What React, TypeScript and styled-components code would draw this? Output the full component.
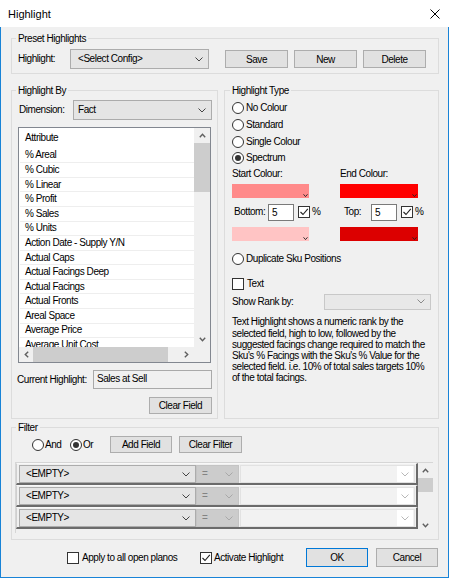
import React from "react";
import styled, { createGlobalStyle } from "styled-components";

const GlobalStyle = createGlobalStyle`
  html, body { margin: 0; padding: 0; background: #ffffff; }
  *, *::before, *::after { box-sizing: border-box; }
`;

const FONT = `"Liberation Sans", Arial, sans-serif`;

const Window = styled.div`
  width: 449px;
  height: 578px;
  display: flex;
  flex-direction: column;
  font-family: ${FONT};
  font-size: 10px;
  letter-spacing: -0.45px;
  line-height: 12px;
  color: #000;
`;

const TitleBar = styled.div`
  flex: none;
  height: 27px;
  background: #ffffff;
  display: flex;
  align-items: center;
  justify-content: space-between;
  padding: 0 9px 0 8px;
`;

const TitleText = styled.span`
  font-size: 11px;
  letter-spacing: 0;
`;

const Body = styled.div`
  flex: 1;
  background: #f0f0f0;
  border: 1px solid #1883d7;
  border-top: none;
  padding: 5px 9px 0 10px;
  display: flex;
  flex-direction: column;
`;

const Group = styled.fieldset`
  margin: 0;
  padding: 0;
  min-width: 0;
  border: 1px solid #dcdcdc;
`;

const Legend = styled.legend<{ $ml: number }>`
  margin-left: ${(p) => p.$ml}px;
  padding: 0 2px;
  height: 13px;
  line-height: 13px;
`;

const PresetRow = styled.div`
  display: flex;
  align-items: center;
  height: 28px;
  padding: 4px 12px 4px 6px;
`;

const FieldLabel = styled.span<{ $w: number; $ml?: number }>`
  flex: none;
  width: ${(p) => p.$w}px;
  margin-left: ${(p) => p.$ml ?? 0}px;
  white-space: nowrap;
`;

const Button = styled.button<{ $w: number; $h?: number; $ml?: number; $default?: boolean }>`
  flex: none;
  width: ${(p) => p.$w}px;
  height: ${(p) => p.$h ?? 18}px;
  margin: 0 0 0 ${(p) => p.$ml ?? 0}px;
  padding: 0;
  font-family: ${FONT};
  font-size: 10px;
  letter-spacing: -0.45px;
  color: #000;
  background: #e1e1e1;
  border: 1px solid ${(p) => (p.$default ? "#0078d7" : "#adadad")};
  border-radius: 0;
`;

type ComboKind = "normal" | "disabled" | "muted" | "value";

const comboBg: Record<ComboKind, string> = {
  normal: "#e5e5e5",
  disabled: "#cccccc",
  muted: "#e8e8e8",
  value: "#f2f2f2",
};
const comboBorder: Record<ComboKind, string> = {
  normal: "#acacac",
  disabled: "#c4c4c4",
  muted: "#c8c8c8",
  value: "#e2e2e2",
};

const Combo = styled.div<{ $w?: number; $h: number; $pl?: number; $kind?: ComboKind; $ml?: number }>`
  flex: ${(p) => (p.$w ? "none" : "1")};
  width: ${(p) => (p.$w ? `${p.$w}px` : "auto")};
  height: ${(p) => p.$h}px;
  margin-left: ${(p) => p.$ml ?? 0}px;
  display: flex;
  align-items: center;
  justify-content: space-between;
  padding: 0 5px 0 ${(p) => p.$pl ?? 4}px;
  background: ${(p) => comboBg[p.$kind ?? "normal"]};
  border: 1px solid ${(p) => comboBorder[p.$kind ?? "normal"]};
  color: ${(p) => (p.$kind === "disabled" ? "#838383" : "#000")};
  white-space: nowrap;
`;

const ValueChevronZone = styled.span`
  align-self: stretch;
  display: flex;
  align-items: center;
  justify-content: center;
  width: 16px;
  margin-right: -4px;
  background: #ffffff;
`;

const MainRow = styled.div`
  display: grid;
  grid-template-columns: 207px 215px;
  column-gap: 6px;
  margin-top: 10px;
`;

const LeftInner = styled.div`
  display: flex;
  flex-direction: column;
  padding: 3px 0 4px;
`;

const DimRow = styled.div`
  display: flex;
  align-items: center;
  height: 20px;
  padding-left: 7px;
`;

const ListBox = styled.div`
  margin: 7px 6px 0;
  height: 236px;
  border: 1px solid #828790;
  background: #ffffff;
  display: grid;
  grid-template-columns: 175px 16px;
  grid-template-rows: 219px 15px;
`;

const ListContent = styled.div`
  overflow: hidden;
`;

const ListHeader = styled.div`
  height: 20.7px;
  display: flex;
  align-items: center;
  padding-left: 6px;
`;

const ListItem = styled.div`
  height: 14.58px;
  display: flex;
  align-items: center;
  padding-left: 5px;
  margin-left: 1px;
  border-bottom: 1px solid #eeeeee;
  white-space: nowrap;
`;

const VScroll = styled.div<{ $thumbTop: number; $thumbH: number }>`
  display: flex;
  flex-direction: column;
  background: #f0f0f0;
`;

const HScroll = styled.div`
  display: flex;
  background: #f0f0f0;
`;

const ScrollArrowBox = styled.div<{ $w?: number; $h?: number }>`
  flex: none;
  width: ${(p) => (p.$w ? `${p.$w}px` : "auto")};
  height: ${(p) => (p.$h ? `${p.$h}px` : "auto")};
  display: flex;
  align-items: center;
  justify-content: center;
`;

const Thumb = styled.div<{ $w?: number; $h?: number }>`
  flex: none;
  width: ${(p) => (p.$w ? `${p.$w}px` : "auto")};
  height: ${(p) => (p.$h ? `${p.$h}px` : "auto")};
  background: #cdcdcd;
`;

const Track = styled.div`
  flex: 1;
`;

const Corner = styled.div`
  background: #f0f0f0;
`;

const CurrentRow = styled.div`
  display: flex;
  align-items: center;
  margin-top: 7px;
  padding-left: 5px;
  height: 19px;
`;

const ReadBox = styled.div`
  flex: none;
  width: 119px;
  height: 19px;
  padding: 2px 0 0 3px;
  border: 1px solid #a9a9a9;
  background: #f0f0f0;
  white-space: nowrap;
`;

const ClearRow = styled.div`
  display: flex;
  justify-content: flex-end;
  margin-top: 8px;
  padding-right: 5px;
`;

const RightInner = styled.div`
  display: flex;
  flex-direction: column;
  padding: 3px 0 0 7px;
`;

const OptionRow = styled.div<{ $h: number; $mt?: number; $gap?: number }>`
  display: flex;
  align-items: center;
  gap: ${(p) => p.$gap ?? 2}px;
  height: ${(p) => p.$h}px;
  margin-top: ${(p) => p.$mt ?? 0}px;
  white-space: nowrap;
`;

const RadioCircle = styled.span<{ $checked?: boolean }>`
  flex: none;
  width: 12px;
  height: 12px;
  border-radius: 50%;
  border: 1px solid #333333;
  background: #ffffff;
  display: inline-flex;
  align-items: center;
  justify-content: center;
  &::after {
    content: "";
    width: 6px;
    height: 6px;
    border-radius: 50%;
    background: #333333;
    display: ${(p) => (p.$checked ? "block" : "none")};
  }
`;

const CheckBox = styled.span`
  flex: none;
  width: 12px;
  height: 12px;
  border: 1px solid #333333;
  background: #ffffff;
  display: inline-flex;
  align-items: center;
  justify-content: center;
`;

const TwoCol = styled.div<{ $mt: number; $h: number }>`
  display: grid;
  grid-template-columns: 108px 1fr;
  align-items: center;
  margin-top: ${(p) => p.$mt}px;
  height: ${(p) => p.$h}px;
`;

const Swatch = styled.div<{ $color: string; $w: number }>`
  position: relative;
  width: ${(p) => p.$w}px;
  height: 14px;
  background: ${(p) => p.$color};
`;

const SwatchMark = styled.svg`
  position: absolute;
  right: 1px;
  bottom: 1px;
`;

const InputCell = styled.div`
  display: flex;
  align-items: center;
`;

const NumInput = styled.div`
  flex: none;
  width: 26px;
  height: 17px;
  padding: 2px 0 0 3px;
  background: #ffffff;
  border: 1px solid #7a7a7a;
  margin-right: 4px;
`;

const Pct = styled.span`
  margin-left: 2px;
`;

const HelpText = styled.p`
  margin: 6.4px 0 0;
  line-height: 11.2px;
  white-space: nowrap;
`;

const FilterBody = styled.div`
  display: flex;
  flex-direction: column;
  padding: 2px 6px 6px 3px;
`;

const FilterTop = styled.div`
  display: flex;
  align-items: center;
  height: 17px;
  padding-left: 17px;
`;

const RadioItem = styled.span<{ $w: number }>`
  flex: none;
  width: ${(p) => p.$w}px;
  display: flex;
  align-items: center;
  gap: 1px;
`;

const FilterGrid = styled.div`
  margin-top: 9px;
  width: 418px;
  height: 71px;
  display: grid;
  grid-template-columns: 402px 15px;
  border-top: 1px solid #d6d6d6;
  border-left: 1px solid #d6d6d6;
  background: #f0f0f0;
`;

const FilterRows = styled.div`
  display: flex;
  flex-direction: column;
  overflow: hidden;
`;

const FilterRow = styled.div`
  display: flex;
  height: 22px;
  padding: 1px 1px 0 2px;
  border-top: 1px solid #f8f8f8;
  border-left: 1px solid #cfcfcf;
  border-right: 2px solid #6b6b6b;
  border-bottom: 2px solid #6b6b6b;
`;

const Footer = styled.div`
  display: flex;
  align-items: center;
  height: 19px;
  margin-top: 8px;
  padding-left: 56px;
`;

const CheckItem = styled.span<{ $w: number; $gap: number }>`
  flex: none;
  width: ${(p) => p.$w}px;
  display: flex;
  align-items: center;
  gap: ${(p) => p.$gap}px;
  white-space: nowrap;
`;

/* ---------- drawings ---------- */

const CloseIcon = () => (
  <svg width="10" height="10" viewBox="0 0 10 10">
    <path d="M0.5 0.5L9.5 9.5M9.5 0.5L0.5 9.5" stroke="#000" strokeWidth="1" fill="none" />
  </svg>
);

const ComboChevron = ({ color = "#444" }: { color?: string }) => (
  <svg width="8" height="5" viewBox="0 0 8 5">
    <path d="M0.5 0.5L4 4L7.5 0.5" stroke={color} strokeWidth="1" fill="none" />
  </svg>
);

const ScrollGlyph = ({ dir }: { dir: "up" | "down" | "left" | "right" }) => {
  const vertical = dir === "up" || dir === "down";
  const d = {
    up: "M0.8 4.2L3.5 1.3L6.2 4.2",
    down: "M0.8 0.8L3.5 3.7L6.2 0.8",
    left: "M4.2 0.8L1.3 3.5L4.2 6.2",
    right: "M0.8 0.8L3.7 3.5L0.8 6.2",
  }[dir];
  return (
    <svg width={vertical ? 7 : 5} height={vertical ? 5 : 7} viewBox={vertical ? "0 0 7 5" : "0 0 5 7"}>
      <path d={d} stroke="#5f5f5f" strokeWidth="1.4" fill="none" />
    </svg>
  );
};

const CheckMark = () => (
  <svg width="10" height="10" viewBox="0 0 10 10">
    <path d="M1.5 5L4 7.5L8.8 1.8" stroke="#222" strokeWidth="1.1" fill="none" />
  </svg>
);

const Check = ({ checked }: { checked?: boolean }) => <CheckBox>{checked ? <CheckMark /> : null}</CheckBox>;

const ColourSwatch = ({ color, w }: { color: string; w: number }) => (
  <Swatch $color={color} $w={w}>
    <SwatchMark width="5" height="3" viewBox="0 0 5 3">
      <path d="M0.5 0.3L2.5 2.6L4.5 0.3" stroke="#222" strokeWidth="0.9" fill="none" />
    </SwatchMark>
  </Swatch>
);

const listItems = [
  "% Areal",
  "% Cubic",
  "% Linear",
  "% Profit",
  "% Sales",
  "% Units",
  "Action Date - Supply Y/N",
  "Actual Caps",
  "Actual Facings Deep",
  "Actual Facings",
  "Actual Fronts",
  "Areal Space",
  "Average Price",
  "Average Unit Cost",
];

const FilterLine = () => (
  <FilterRow>
    <Combo $w={177} $h={18} $pl={6}>
      <span>&lt;EMPTY&gt;</span>
      <ComboChevron color="#444" />
    </Combo>
    <Combo $w={43} $h={18} $pl={5} $kind="disabled">
      <span>=</span>
      <ComboChevron color="#a8a8a8" />
    </Combo>
    <Combo $h={18} $kind="value" $ml={1}>
      <span />
      <ValueChevronZone>
        <ComboChevron color="#b8b8b8" />
      </ValueChevronZone>
    </Combo>
  </FilterRow>
);

export default function App() {
  return (
    <>
      <GlobalStyle />
      <Window>
        <TitleBar>
          <TitleText>Highlight</TitleText>
          <CloseIcon />
        </TitleBar>
        <Body>
          <Group>
            <Legend $ml={4}>Preset Highlights</Legend>
            <PresetRow>
              <FieldLabel $w={52}>Highlight:</FieldLabel>
              <Combo $w={139} $h={20} $pl={7}>
                <span>&lt;Select Config&gt;</span>
                <ComboChevron />
              </Combo>
              <Button $w={63} $ml={16}>Save</Button>
              <Button $w={63} $ml={6}>New</Button>
              <Button $w={63} $ml={6}>Delete</Button>
            </PresetRow>
          </Group>

          <MainRow>
            <Group>
              <Legend $ml={4}>Highlight By</Legend>
              <LeftInner>
                <DimRow>
                  <FieldLabel $w={54}>Dimension:</FieldLabel>
                  <Combo $w={139} $h={20} $pl={4}>
                    <span>Fact</span>
                    <ComboChevron />
                  </Combo>
                </DimRow>
                <ListBox>
                  <ListContent>
                    <ListHeader>Attribute</ListHeader>
                    {listItems.map((it) => (
                      <ListItem key={it}>{it}</ListItem>
                    ))}
                  </ListContent>
                  <VScroll $thumbTop={15} $thumbH={49}>
                    <ScrollArrowBox $h={15}>
                      <ScrollGlyph dir="up" />
                    </ScrollArrowBox>
                    <Thumb $h={49} />
                    <Track />
                    <ScrollArrowBox $h={15}>
                      <ScrollGlyph dir="down" />
                    </ScrollArrowBox>
                  </VScroll>
                  <HScroll>
                    <ScrollArrowBox $w={14}>
                      <ScrollGlyph dir="left" />
                    </ScrollArrowBox>
                    <Thumb $w={135} />
                    <Track />
                    <ScrollArrowBox $w={15}>
                      <ScrollGlyph dir="right" />
                    </ScrollArrowBox>
                  </HScroll>
                  <Corner />
                </ListBox>
                <CurrentRow>
                  <FieldLabel $w={76}>Current Highlight:</FieldLabel>
                  <ReadBox>Sales at Sell</ReadBox>
                </CurrentRow>
                <ClearRow>
                  <Button $w={63} $h={17}>Clear Field</Button>
                </ClearRow>
              </LeftInner>
            </Group>

            <Group>
              <Legend $ml={5}>Highlight Type</Legend>
              <RightInner>
                <OptionRow $h={16.7}>
                  <RadioCircle />
                  <span>No Colour</span>
                </OptionRow>
                <OptionRow $h={16.7}>
                  <RadioCircle />
                  <span>Standard</span>
                </OptionRow>
                <OptionRow $h={16.7}>
                  <RadioCircle />
                  <span>Single Colour</span>
                </OptionRow>
                <OptionRow $h={16.7}>
                  <RadioCircle $checked />
                  <span>Spectrum</span>
                </OptionRow>

                <TwoCol $mt={1} $h={12}>
                  <span>Start Colour:</span>
                  <span>End Colour:</span>
                </TwoCol>
                <TwoCol $mt={4} $h={14}>
                  <ColourSwatch color="#ff8a8a" w={77} />
                  <ColourSwatch color="#ff0000" w={78} />
                </TwoCol>
                <TwoCol $mt={6} $h={17}>
                  <InputCell>
                    <FieldLabel $w={34} $ml={2}>Bottom:</FieldLabel>
                    <NumInput>5</NumInput>
                    <Check checked />
                    <Pct>%</Pct>
                  </InputCell>
                  <InputCell>
                    <FieldLabel $w={27} $ml={4}>Top:</FieldLabel>
                    <NumInput>5</NumInput>
                    <Check checked />
                    <Pct>%</Pct>
                  </InputCell>
                </TwoCol>
                <TwoCol $mt={6} $h={14}>
                  <ColourSwatch color="#ffc4c4" w={77} />
                  <ColourSwatch color="#dc0000" w={78} />
                </TwoCol>

                <OptionRow $h={16.7} $mt={10}>
                  <RadioCircle />
                  <span>Duplicate Sku Positions</span>
                </OptionRow>
                <OptionRow $h={13} $mt={10} $gap={3}>
                  <Check />
                  <span>Text</span>
                </OptionRow>
                <OptionRow $h={16} $mt={3.5} $gap={0}>
                  <FieldLabel $w={92}>Show Rank by:</FieldLabel>
                  <Combo $w={107} $h={16} $kind="muted">
                    <span />
                    <ComboChevron color="#8a8a8a" />
                  </Combo>
                </OptionRow>
                <HelpText>
                  Text Highlight shows a numeric rank by the
                  <br />
                  selected field, high to low, followed by the
                  <br />
                  suggested facings change required to match the
                  <br />
                  Sku's % Facings with the Sku's % Value for the
                  <br />
                  selected field. i.e. 10% of total sales targets 10%
                  <br />
                  of the total facings.
                </HelpText>
              </RightInner>
            </Group>
          </MainRow>

          <Group style={{ marginTop: 2 }}>
            <Legend $ml={4}>Filter</Legend>
            <FilterBody>
              <FilterTop>
                <RadioItem $w={38}>
                  <RadioCircle />
                  <span>And</span>
                </RadioItem>
                <RadioItem $w={40}>
                  <RadioCircle $checked />
                  <span>Or</span>
                </RadioItem>
                <Button $w={62} $h={17}>Add Field</Button>
                <Button $w={63} $h={17} $ml={7}>Clear Filter</Button>
              </FilterTop>
              <FilterGrid>
                <FilterRows>
                  <FilterLine />
                  <FilterLine />
                  <FilterLine />
                </FilterRows>
                <VScroll $thumbTop={15} $thumbH={14}>
                  <ScrollArrowBox $h={15}>
                    <ScrollGlyph dir="up" />
                  </ScrollArrowBox>
                  <Thumb $h={14} />
                  <Track />
                  <ScrollArrowBox $h={15}>
                    <ScrollGlyph dir="down" />
                  </ScrollArrowBox>
                </VScroll>
              </FilterGrid>
            </FilterBody>
          </Group>

          <Footer>
            <CheckItem $w={133} $gap={3}>
              <Check />
              <span>Apply to all open planos</span>
            </CheckItem>
            <CheckItem $w={106} $gap={2}>
              <Check checked />
              <span>Activate Highlight</span>
            </CheckItem>
            <Button $w={62} $h={19} $default>OK</Button>
            <Button $w={62} $h={19} $ml={8}>Cancel</Button>
          </Footer>
        </Body>
      </Window>
    </>
  );
}
